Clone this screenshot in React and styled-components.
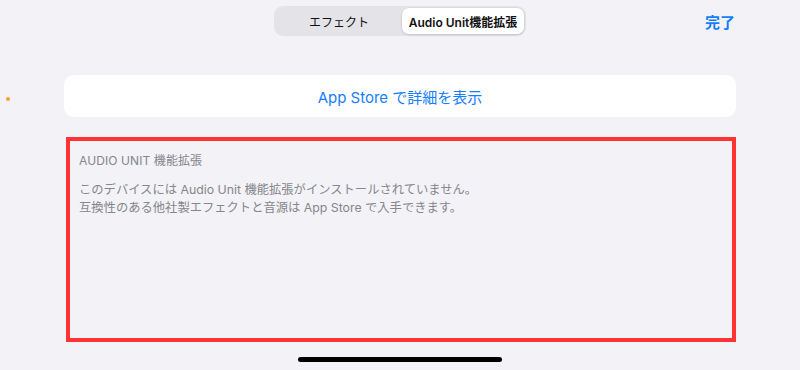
import React, { useState } from 'react';
import styled, { createGlobalStyle } from 'styled-components';

const GlobalStyle = createGlobalStyle`
  html, body {
    margin: 0;
    padding: 0;
    background: #f2f2f7;
  }
  body {
    font-family: "Inter", "Noto Sans CJK JP", sans-serif;
    -webkit-font-smoothing: antialiased;
  }
`;

const Screen = styled.div`
  position: relative;
  width: 800px;
  height: 370px;
  display: flex;
  flex-direction: column;
  background: #f2f2f7;
  overflow: hidden;
`;

const NavBar = styled.div`
  display: grid;
  grid-template-columns: 1fr auto 1fr;
  align-items: center;
  height: 42px;
  padding: 0 65px;
`;

const Segmented = styled.div`
  grid-column: 2;
  display: flex;
  width: 248px;
  height: 26px;
  padding: 2px;
  border-radius: 9px;
  background: #e3e3e8;
`;

const Segment = styled.button`
  flex: ${({ wide }) => (wide ? '0 0 122px' : '1')};
  border: none;
  border-radius: 7px;
  font-family: "Inter", "Noto Sans CJK JP", sans-serif;
  font-size: 12px;
  font-weight: ${({ active }) => (active ? 600 : 400)};
  color: #111;
  background: ${({ active }) => (active ? '#ffffff' : 'transparent')};
  box-shadow: ${({ active }) => (active ? '0 1px 3px rgba(0,0,0,0.12), 0 0 0 0.5px rgba(0,0,0,0.04)' : 'none')};
  padding: 0;
  cursor: pointer;
`;

const Done = styled.button`
  grid-column: 3;
  justify-self: end;
  border: none;
  background: none;
  padding: 0;
  font-family: "Noto Sans CJK JP", sans-serif;
  font-size: 15px;
  font-weight: 700;
  color: #147efb;
`;

const Content = styled.div`
  display: flex;
  flex-direction: column;
  padding: 33px 64px 0 64px;
`;

const Dot = styled.span`
  position: absolute;
  left: 6px;
  top: 97px;
  width: 4px;
  height: 4px;
  border-radius: 50%;
  background: #f7a128;
`;

const StoreCard = styled.button`
  height: 42px;
  border: none;
  border-radius: 10px;
  background: #ffffff;
  font-family: "Inter", "Noto Sans CJK JP", sans-serif;
  font-size: 15px;
  color: #147efb;
  padding: 0;
  cursor: pointer;
`;

const Highlight = styled.section`
  margin: 20px 0 0 2px;
  height: 205px;
  box-sizing: border-box;
  border: 4px solid #ff3333;
  padding: 12px 9px;
  color: #86868b;
  font-family: "Inter", "Noto Sans CJK JP", sans-serif;
`;

const Header = styled.div`
  font-size: 12px;
  line-height: 16px;
  letter-spacing: 0.1px;
`;

const Body = styled.p`
  margin: 12px 0 0;
  font-size: 12.3px;
  line-height: 18px;
`;

const HomeBar = styled.div`
  align-self: center;
  width: 204px;
  height: 5px;
  border-radius: 3px;
  background: #000;
  margin-top: 15px;
`;

export default function App() {
  const [tab, setTab] = useState(1);

  return (
    <Screen>
      <GlobalStyle />
      <NavBar>
        <Segmented>
          <Segment active={tab === 0} onClick={() => setTab(0)}>エフェクト</Segment>
          <Segment wide active={tab === 1} onClick={() => setTab(1)}>Audio Unit機能拡張</Segment>
        </Segmented>
        <Done>完了</Done>
      </NavBar>
      <Dot />
      <Content>
        <StoreCard>App Store で詳細を表示</StoreCard>
        <Highlight>
          <Header>AUDIO UNIT 機能拡張</Header>
          <Body>
            このデバイスには Audio Unit 機能拡張がインストールされていません。
            <br />
            互換性のある他社製エフェクトと音源は App Store で入手できます。
          </Body>
        </Highlight>
      </Content>
      <HomeBar />
    </Screen>
  );
}
